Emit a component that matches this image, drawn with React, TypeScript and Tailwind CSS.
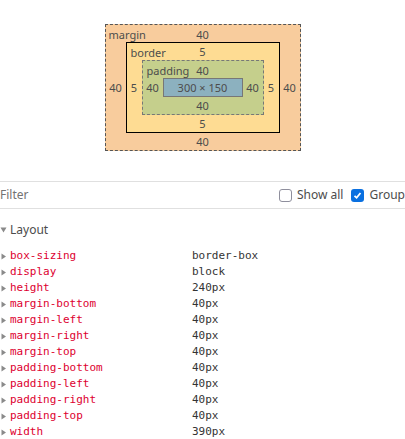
const rows: [string, string][] = [
  ["box-sizing", "border-box"],
  ["display", "block"],
  ["height", "240px"],
  ["margin-bottom", "40px"],
  ["margin-left", "40px"],
  ["margin-right", "40px"],
  ["margin-top", "40px"],
  ["padding-bottom", "40px"],
  ["padding-left", "40px"],
  ["padding-right", "40px"],
  ["padding-top", "40px"],
  ["width", "390px"],
];

function Arrow() {
  return (
    <svg width="6" height="7" viewBox="0 0 6 7" className="shrink-0">
      <path d="M0.5 0.5 L5 3.5 L0.5 6.5 Z" fill="#8a8a8a" />
    </svg>
  );
}

function BoxModel() {
  return (
    <div className="flex justify-center pt-[24px] text-[11px] leading-none text-[#4c4c4c]">
      <div className="relative grid h-[127px] w-[196px] grid-cols-[20px_1fr_20px] grid-rows-[17px_1fr_17px] border border-dashed border-[#555] bg-[#f8cc9d]">
        <span className="absolute left-[3px] top-[4px]">margin</span>
        <div className="col-span-3 flex items-center justify-center pt-[1px]">40</div>
        <div className="flex items-center justify-center">40</div>
        <div className="relative grid grid-cols-[15px_1fr_15px] grid-rows-[17px_1fr_17px] border border-black bg-[#fedc93]">
          <span className="absolute left-[4px] top-[4px]">border</span>
          <div className="col-span-3 flex items-center justify-center">5</div>
          <div className="flex items-center justify-center">5</div>
          <div className="relative grid grid-cols-[20px_1fr_20px] grid-rows-[17px_1fr_17px] border border-dashed border-[#777] bg-[#c5cf8c]">
            <span className="absolute left-[4px] top-[4px]">padding</span>
            <div className="col-span-3 flex items-center justify-center pt-[1px]">40</div>
            <div className="flex items-center justify-center">40</div>
            <div className="flex items-center justify-center border border-[#777] bg-[#8cb1bf]">300 × 150</div>
            <div className="flex items-center justify-center">40</div>
            <div className="col-span-3 flex items-center justify-center">40</div>
          </div>
          <div className="flex items-center justify-center">5</div>
          <div className="col-span-3 flex items-center justify-center">5</div>
        </div>
        <div className="flex items-center justify-center">40</div>
        <div className="col-span-3 flex items-center justify-center">40</div>
      </div>
    </div>
  );
}

export default function App() {
  return (
    <div className="h-[439px] w-[405px] overflow-hidden bg-white font-['Noto_Sans',sans-serif]">
      <BoxModel />

      <div className="mt-[30px] flex h-[28px] items-center border-y border-[#e0e0e0] text-[12px]">
        <span className="flex-1 text-[#737373]">Filter</span>
        <label className="flex items-center gap-[5px] text-[#4c4c4c]">
          <span className="h-[13px] w-[13px] rounded-[3px] border border-[#8f8f9d] bg-white" />
          Show all
        </label>
        <label className="ml-[8px] flex items-center gap-[5px] text-[#4c4c4c]">
          <span className="flex h-[13px] w-[13px] items-center justify-center rounded-[3px] bg-[#0a70e0]">
            <svg width="9" height="9" viewBox="0 0 9 9">
              <path d="M1.5 4.8 L3.6 6.8 L7.5 2" stroke="white" strokeWidth="1.8" fill="none" />
            </svg>
          </span>
          Group
        </label>
      </div>

      <div className="mt-[12px] flex items-center gap-[3px] text-[12px] text-[#4c4c4c]">
        <svg width="7" height="6" viewBox="0 0 7 6">
          <path d="M0.5 0.5 L6.5 0.5 L3.5 5.5 Z" fill="#8a8a8a" />
        </svg>
        Layout
      </div>

      <div className="mt-[9px] flex flex-col font-['DejaVu_Sans_Mono',monospace] text-[11px] leading-[16px]">
        {rows.map(([name, value]) => (
          <div key={name} className="flex items-center">
            <div className="flex w-[192px] items-center gap-[3px] pl-[1px]">
              <Arrow />
              <span className="text-[#dd0030]">{name}</span>
            </div>
            <span className="text-[#333]">{value}</span>
          </div>
        ))}
      </div>
    </div>
  );
}
